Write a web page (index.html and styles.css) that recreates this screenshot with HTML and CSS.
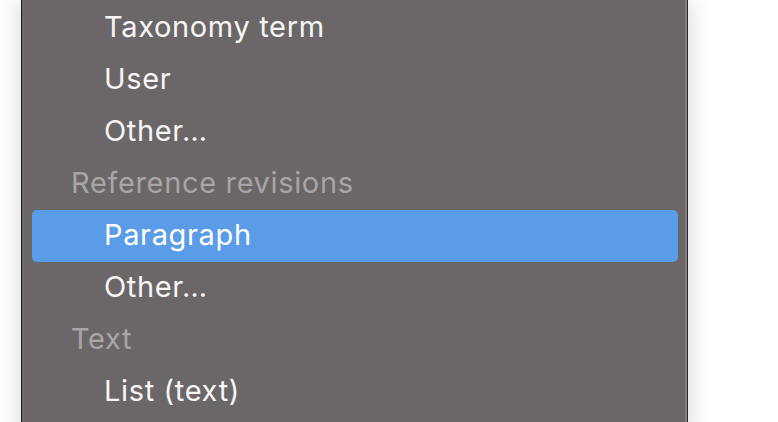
FILE: index.html
```html
<!DOCTYPE html>
<html>
<head>
<meta charset="utf-8">
<link rel="stylesheet" href="styles.css">
</head>
<body>
<div class="page">
  <div class="menu">
    <div class="item">Taxonomy term</div>
    <div class="item">User</div>
    <div class="item">Other…</div>
    <div class="header">Reference revisions</div>
    <div class="item selected">Paragraph</div>
    <div class="item">Other…</div>
    <div class="header">Text</div>
    <div class="item">List (text)</div>
  </div>
</div>
</body>
</html>
```
FILE: styles.css
```css
html, body {
  margin: 0;
  padding: 0;
  background: #ffffff;
  overflow: hidden;
}
.page {
  width: 778px;
  height: 422px;
  padding-left: 21px;
  box-sizing: border-box;
  display: flex;
}
.menu {
  width: 667px;
  height: 440px;
  background: #6b6667;
  border-left: 1px solid #1f1c1d;
  border-right: 1px solid #2a2728;
  box-shadow: inset -2px 0 0 #858081, 0 0 22px rgba(0,0,0,0.18);
  padding-top: 2px;
  box-sizing: border-box;
  font-family: "Inter", "Liberation Sans", sans-serif;
  font-size: 29px;
  letter-spacing: 0.65px;
  display: flex;
  flex-direction: column;
}
.item, .header {
  height: 52px;
  box-sizing: border-box;
  padding-bottom: 3px;
  display: flex;
  align-items: center;
  flex-shrink: 0;
}
.item {
  color: #f7f6f6;
  margin: 0 9px 0 10px;
  padding-left: 72px;
  border-radius: 5px;
}
.header {
  color: #a9a5a6;
  padding-left: 49px;
}
.selected {
  background: #5b9ce8;
  color: #ffffff;
}
```
